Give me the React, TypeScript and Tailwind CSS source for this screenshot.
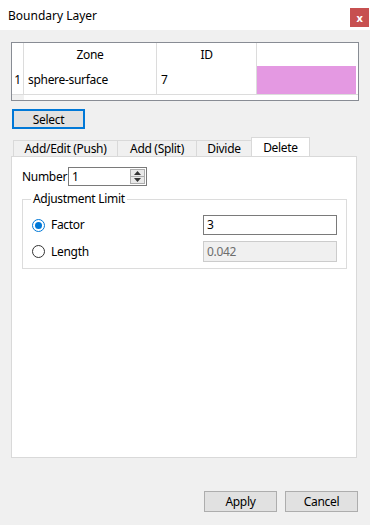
const font = { fontFamily: '"Noto Sans", "Open Sans", sans-serif' }

type TabProps = {
  label: string
  width: string
  active?: boolean
}

function Tab({ label, width, active = false }: TabProps) {
  if (active) {
    return (
      <div
        className={`${width} -mb-px flex h-[20px] items-center justify-center border border-b-0 border-[#d9d9d9] bg-white text-[12px] text-black`}
      >
        {label}
      </div>
    )
  }
  return (
    <div
      className={`${width} mt-[3px] flex h-[16px] items-center justify-center border border-b-0 border-r-0 border-[#d9d9d9] bg-[#f0f0f0] text-[12px] text-black`}
    >
      {label}
    </div>
  )
}

function Radio({ checked }: { checked?: boolean }) {
  return (
    <span
      className={
        checked
          ? 'flex h-[13px] w-[13px] items-center justify-center rounded-full border border-[#0078d7] bg-white'
          : 'flex h-[13px] w-[13px] items-center justify-center rounded-full border border-[#333] bg-white'
      }
    >
      {checked && <span className="h-[7px] w-[7px] rounded-full bg-[#0078d7]" />}
    </span>
  )
}

function Spinner() {
  return (
    <div className="flex h-[19px] w-[79px] border border-[#7a7a7a] bg-white">
      <span className="flex-1 pl-[3px] text-[12px] leading-[17px]">1</span>
      <div className="mr-[1px] mt-[1px] flex h-[15px] w-[15px] flex-col border border-[#adadad] bg-[#e9e9e9]">
        <div className="flex flex-1 items-center justify-center border-b border-[#adadad]">
          <svg width="7" height="4" viewBox="0 0 7 4">
            <path d="M3.5 0 L7 4 L0 4 Z" fill="#333" />
          </svg>
        </div>
        <div className="flex flex-1 items-center justify-center">
          <svg width="7" height="4" viewBox="0 0 7 4">
            <path d="M0 0 L7 0 L3.5 4 Z" fill="#333" />
          </svg>
        </div>
      </div>
    </div>
  )
}

export default function App() {
  return (
    <div
      className="flex h-[525px] w-[370px] flex-col bg-[#f0f0f0] tracking-[-0.3px] text-black"
      style={font}
    >
      {/* title bar */}
      <div className="flex h-[30px] items-start justify-between bg-white">
        <span className="mt-[8px] pl-[8px] text-[12px] leading-[16px] tracking-normal">
          Boundary Layer
        </span>
        <button className="mr-[1px] mt-[8px] flex h-[19px] w-[19px] items-center justify-center bg-[#c75050] text-[11px] font-bold leading-none text-white">
          x
        </button>
      </div>

      <div className="flex flex-1 flex-col pl-[11px] pr-[11px]">
        {/* table */}
        <div className="mt-[12px] flex h-[59px] w-[348px] flex-col border border-[#888c94] bg-white text-[12px]">
          <div className="flex h-[23px]">
            <div className="w-[12px] border-r border-[#dcdcdc]" />
            <div className="flex w-[133px] items-center justify-center border-r border-[#dcdcdc]">
              Zone
            </div>
            <div className="flex w-[100px] items-center justify-center border-r border-[#dcdcdc]">
              ID
            </div>
            <div className="w-[100px]" />
          </div>
          <div className="flex h-[29px] border-b border-[#dcdcdc]">
            <div className="flex w-[12px] items-center justify-center border-r border-[#dcdcdc]">
              1
            </div>
            <div className="flex w-[133px] items-center border-r border-[#dcdcdc] pl-[4px]">
              sphere-surface
            </div>
            <div className="flex w-[100px] items-center border-r border-[#dcdcdc] pl-[4px]">
              7
            </div>
            <div className="w-[99px] bg-[#e499e2]" />
          </div>
          <div className="flex flex-1">
            <div className="w-[12px] bg-[#f0f0f0]" />
          </div>
        </div>

        {/* select */}
        <button className="ml-[1px] mt-[8px] flex h-[20px] w-[73px] items-center justify-center border-2 border-[#0078d7] bg-[#e1e1e1] pt-[1px] text-[12px] leading-none">
          Select
        </button>

        {/* tabs */}
        <div className="ml-[2px] mt-[8px] flex h-[19px] items-start">
          <Tab label="Add/Edit (Push)" width="w-[104px]" />
          <Tab label="Add (Split)" width="w-[79px]" />
          <Tab label="Divide" width="w-[55px]" />
          <Tab label="Delete" width="w-[59px]" active />
        </div>

        <div className="flex h-[302px] w-[346px] flex-col border border-[#d9d9d9] bg-white text-[12px]">
          <div className="mt-[10px] flex items-center">
            <span className="ml-[10px] w-[46px] shrink-0">Number</span>
            <Spinner />
          </div>

          <fieldset className="ml-[10px] mt-[6px] h-[77px] w-[325px] border border-[#dcdcdc] px-0 pt-0">
            <legend className="ml-[8px] px-[2px] leading-[14px]">Adjustment Limit</legend>
            <div className="mt-[9px] flex h-[20px] items-center">
              <span className="ml-[9px]">
                <Radio checked />
              </span>
              <span className="ml-[6px] flex-1">Factor</span>
              <div className="mr-[9px] flex h-[20px] w-[134px] items-center border border-[#7a7a7a] bg-white pl-[3px]">
                3
              </div>
            </div>
            <div className="mt-[6px] flex h-[21px] items-center">
              <span className="ml-[9px]">
                <Radio />
              </span>
              <span className="ml-[6px] flex-1">Length</span>
              <div className="mr-[9px] flex h-[21px] w-[134px] items-center border border-[#cccccc] bg-[#f0f0f0] pl-[3px] text-[#6d6d6d]">
                0.042
              </div>
            </div>
          </fieldset>
        </div>

        {/* buttons */}
        <div className="mt-[33px] flex justify-end gap-[8px] pr-[1px]">
          <button className="flex h-[21px] w-[73px] items-center justify-center border border-[#adadad] bg-[#e1e1e1] text-[12px] leading-none">
            Apply
          </button>
          <button className="flex h-[21px] w-[73px] items-center justify-center border border-[#adadad] bg-[#e1e1e1] text-[12px] leading-none">
            Cancel
          </button>
        </div>
      </div>
    </div>
  )
}
